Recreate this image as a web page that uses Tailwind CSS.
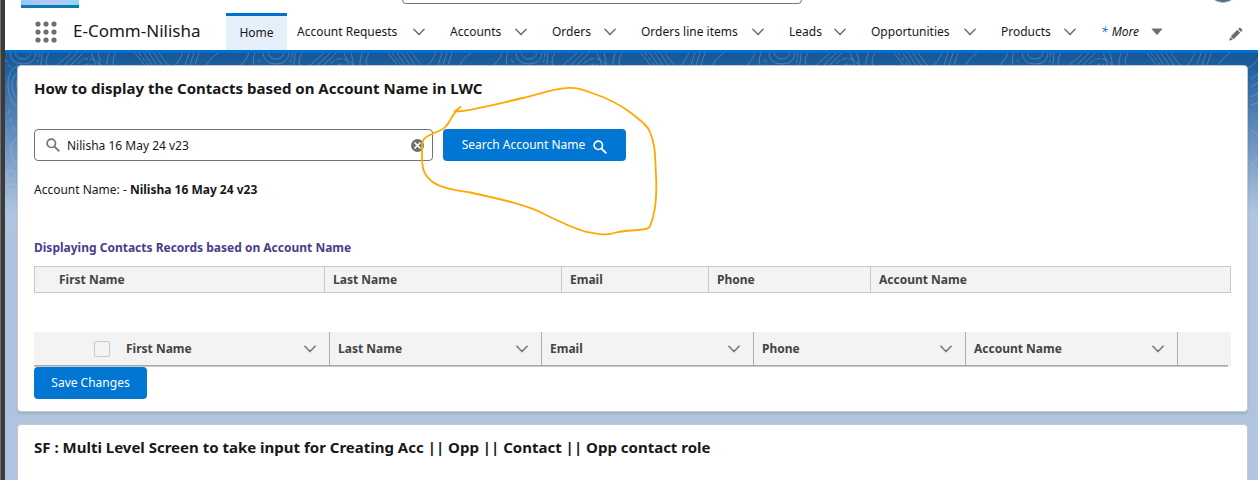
<!DOCTYPE html>
<html lang="en">
<head>
<meta charset="utf-8">
<meta name="viewport" content="width=device-width, initial-scale=1">
<title>E-Comm-Nilisha | Home</title>
<script src="https://cdn.jsdelivr.net/npm/@tailwindcss/browser@4"></script>
</head>
<body class="flex h-screen overflow-hidden bg-[#b0c4df] font-['Noto_Sans','Open_Sans',sans-serif] text-xs text-[#181818]">
<svg class="hidden" aria-hidden="true">
  <symbol id="chevron" viewBox="0 0 12 8"><path d="M.9 1.3 6 6.6 11.100 1.3" fill="none" stroke="currentColor" stroke-width="1.500" stroke-linecap="round" stroke-linejoin="round"/></symbol>
  <symbol id="search" viewBox="0 0 14 14"><circle cx="5.3" cy="5.3" r="4.2" fill="none" stroke="currentColor" stroke-width="1.7"/><path d="m8.600 8.600 4.200 4.200" stroke="currentColor" stroke-width="1.900" stroke-linecap="round"/></symbol>
</svg>
<div class="w-[5px] shrink-0 border-l border-[#707070] bg-[#3b3b3b]"></div>
<div class="flex min-w-0 flex-1 flex-col">
  <header class="shrink-0 border-b-3 border-[#0070d2] bg-white">
    <div class="flex h-[13px] items-end overflow-hidden pl-4 pr-[19px]">
      <div class="mb-[5px] h-5 w-[58px] shrink-0 border-b-3 border-[#0f78b4] bg-linear-to-r from-[#8fc9f5] via-[#b9c7f5] to-[#8fd8f5]"></div>
      <input type="search" aria-label="Search" class="mb-[9px] ml-[323px] h-8 w-[400px] rounded-sm border border-[#747474]">
      <button aria-label="Profile" class="mb-[10px] ml-auto size-8 shrink-0 rounded-full border border-[#a9b4c4] bg-[#50698f]"></button>
    </div>
    <nav class="flex h-[37px] items-center whitespace-nowrap" aria-label="Main">
      <button aria-label="App Launcher" class="ml-[30px] text-[#706e6b]"><svg class="size-[22px]" viewBox="0 0 22 22" fill="currentColor"><circle cx="3" cy="3" r="2.6"/><circle cx="11" cy="3" r="2.6"/><circle cx="19" cy="3" r="2.6"/><circle cx="3" cy="11" r="2.6"/><circle cx="11" cy="11" r="2.6"/><circle cx="19" cy="11" r="2.6"/><circle cx="3" cy="19" r="2.6"/><circle cx="11" cy="19" r="2.6"/><circle cx="19" cy="19" r="2.6"/></svg></button>
      <span class="w-[169px] pl-4 text-[17px]">E-Comm-Nilisha</span>
      <a href="#" class="flex h-full w-[61px] items-center justify-center border-t-3 border-[#0070d2] bg-[#e5effa] pb-px">Home</a>
      <div class="flex w-[151px] items-center justify-between pl-[10px] pr-[13px]"><a href="#">Account Requests</a><button aria-label="Account Requests list" class="text-[#706e6b]"><svg class="h-2 w-3"><use href="#chevron"/></svg></button></div>
      <div class="flex w-[102px] items-center justify-between pl-3 pr-[13px]"><a href="#">Accounts</a><button aria-label="Accounts list" class="text-[#706e6b]"><svg class="h-2 w-3"><use href="#chevron"/></svg></button></div>
      <div class="flex w-[89px] items-center justify-between pl-3 pr-[13px]"><a href="#">Orders</a><button aria-label="Orders list" class="text-[#706e6b]"><svg class="h-2 w-3"><use href="#chevron"/></svg></button></div>
      <div class="flex w-[148px] items-center justify-between pl-3 pr-[13px]"><a href="#">Orders line items</a><button aria-label="Orders line items list" class="text-[#706e6b]"><svg class="h-2 w-3"><use href="#chevron"/></svg></button></div>
      <div class="flex w-[82px] items-center justify-between pl-3 pr-[13px]"><a href="#">Leads</a><button aria-label="Leads list" class="text-[#706e6b]"><svg class="h-2 w-3"><use href="#chevron"/></svg></button></div>
      <div class="flex w-[130px] items-center justify-between pl-3 pr-[13px]"><a href="#">Opportunities</a><button aria-label="Opportunities list" class="text-[#706e6b]"><svg class="h-2 w-3"><use href="#chevron"/></svg></button></div>
      <div class="flex w-[100px] items-center justify-between pl-3 pr-[13px]"><a href="#">Products</a><button aria-label="Products list" class="text-[#706e6b]"><svg class="h-2 w-3"><use href="#chevron"/></svg></button></div>
      <button class="flex items-center pl-3 italic"><span class="mr-1 text-[#0176d3]">*</span>More<svg class="ml-3 h-[7px] w-3 text-[#706e6b]" viewBox="0 0 12 7" fill="currentColor"><path d="M1 .4h10q.7.1.3.7L6.600 6.500q-.6.5-1.200 0L.7 1.100Q.300.500 1 .400z"/></svg></button>
      <button aria-label="Edit navigation" class="ml-auto mr-[15px] mt-1 text-[#706e6b]"><svg class="size-[14px]" viewBox="0 0 14 14" fill="currentColor"><path d="M10.200.9q.7-.7 1.400 0l1.500 1.500q.7.7 0 1.400l-1.100 1.100L9.100 2z"/><path d="m8.300 2.800 2.900 2.900-6.600 6.600-2.900-2.900z"/><path d="m1.200 10.100 2.700 2.700-3 .8q-.600.100-.5-.5z"/></svg></button>
    </nav>
  </header>
  <main class="relative flex-1 overflow-hidden bg-linear-to-b from-[#195594] from-0% via-[#1b5f9e] via-[12px] to-[#b0c4df] to-[160px] pl-3 pr-[10px] pt-3">
    <svg class="absolute inset-0 h-[200px] w-full" aria-hidden="true">
      <defs>
        <pattern id="topo" width="253" height="200" patternUnits="userSpaceOnUse">
          <g fill="none" stroke="#a9cdf0" stroke-opacity=".32" stroke-width="1">
            <path d="M5 0q1 11 13 11T31 0M10 0q2 6 8 6t8-6" />
            <path d="M34 0q0 8-4 14M0 6q4 8 8 10" stroke-dasharray="4 2"/>
            <path d="M44 0q-6 9 0 16M37 0q0 8-2 14M50 14 66 0M56 16 72 0M62 16 78 0"/>
            <path d="M68 16Q84-6 100 18M74 18Q84 4 92 18" stroke-dasharray="5 2"/>
            <path d="M86 0q4 6 5 16M93 0q3 8 2 16M104 0q-3 8-2 16M111 0q-6 9 0 16M130 0l14 18M139 0l12 18M144 0l12 18M149 0l12 18M154 0q8 12 12 14t12-14"/>
            <path d="M134 0l14 18" stroke-dasharray="4 2"/>
            <path d="M184 0l-6 18M189 0l-6 18M194 0l-6 18M213 0q-10 6-14 18M226 18q14-6 18-18"/>
            <path d="M250 0q-4 8 1 18"/>
            <path d="M13 12Q2 18 3 34T14 56M14 18Q6 24 7 34t8 14M14 24q-5 6 0 16M14 82Q6 88 6 98t8 16M0 134q6-6 14 0M0 184q4-18 12-20"/>
            <circle cx="6" cy="122" r="4.500"/>
            <path d="M0 148 12 134M0 154 12 140M0 160 12 146M0 170 12 154"/>
            <path d="M4 56q0 10 6 22" stroke-dasharray="5 4"/>
            <path d="M234 44q12-8 14-2t-14 10M234 26 253 12M234 34 253 22M234 78q8 0 8 14t11 20M234 112q10-14 19-8M234 128h19M234 136h19M234 144h19M234 152h19"/>
          </g>
        </pattern>
      </defs>
      <rect width="100%" height="200" fill="url(#topo)"/>
    </svg>
    <section class="relative rounded-sm border border-[#c9c9c9] bg-white px-4 pb-3 pt-[10px] shadow-[0_2px_2px_rgba(0,0,0,0.1)]">
      <h1 class="text-[15px] leading-6 font-bold">How to display the Contacts based on Account Name in LWC</h1>
      <form class="mt-[29px] flex items-center gap-[10px]">
        <div class="relative w-[399px]">
          <svg class="absolute left-3 top-[9px] size-[14px] text-[#747474]"><use href="#search"/></svg>
          <input type="text" aria-label="Account name" value="Nilisha 16 May 24 v23" class="block h-8 w-full rounded-sm border border-[#747474] bg-white pl-8 pr-8">
          <button type="button" aria-label="Clear" class="absolute right-[9px] top-[10px] size-[13px]"><svg class="size-[13px]" viewBox="0 0 13 13"><circle cx="6.500" cy="6.500" r="6.500" fill="#706e6b"/><path d="m4 4 5 5M9 4l-5 5" stroke="#fff" stroke-width="1.700" stroke-linecap="round"/></svg></button>
        </div>
        <button type="button" class="flex h-8 w-[183px] items-center justify-center gap-2 rounded-sm bg-[#0176d3] text-white">Search Account Name<svg class="mt-[3px] size-[14px]"><use href="#search"/></svg></button>
      </form>
      <p class="mt-[19px] leading-5">Account Name: - <strong>Nilisha 16 May 24 v23</strong></p>
      <h2 class="mt-[38px] leading-5 font-bold text-[#483d8b]">Displaying Contacts Records based on Account Name</h2>
      <table class="mt-2 h-[27px] w-full table-fixed border-collapse bg-[#f3f3f3] text-left text-[#444444]">
        <colgroup><col class="w-[290px]"><col class="w-[237px]"><col class="w-[147px]"><col class="w-[162px]"><col></colgroup>
        <thead><tr>
          <th class="border border-[#c9c9c9] pl-6">First Name</th>
          <th class="border border-[#c9c9c9] pl-2">Last Name</th>
          <th class="border border-[#c9c9c9] pl-2">Email</th>
          <th class="border border-[#c9c9c9] pl-2">Phone</th>
          <th class="border border-[#c9c9c9] pl-2">Account Name</th>
        </tr></thead>
      </table>
      <div class="mt-[39px] bg-[#f3f3f3] pr-[3px]">
        <div class="border-b border-[#c9c9c9]">
        <table class="h-[34px] w-full table-fixed border-separate border-spacing-0 border-b border-[#a8a8a8] text-left text-[#444444]">
          <colgroup><col class="w-[83px]"><col class="w-[213px]"><col class="w-[212px]"><col class="w-[212px]"><col class="w-[212px]"><col class="w-[212px]"><col></colgroup>
          <thead><tr>
            <th class="pl-[60px]"><input type="checkbox" aria-label="Select all rows" class="block size-4 appearance-none rounded-xs border border-[#c9c9c9] bg-[#f3f3f3]"></th>
            <th class="border-r border-[#aeaeae] pl-[9px] pr-[13px]"><div class="flex items-center justify-between">First Name<button aria-label="First Name actions" class="text-[#747474]"><svg class="h-2 w-3"><use href="#chevron"/></svg></button></div></th>
            <th class="border-r border-[#aeaeae] pl-2 pr-[13px]"><div class="flex items-center justify-between">Last Name<button aria-label="Last Name actions" class="text-[#747474]"><svg class="h-2 w-3"><use href="#chevron"/></svg></button></div></th>
            <th class="border-r border-[#aeaeae] pl-2 pr-[13px]"><div class="flex items-center justify-between">Email<button aria-label="Email actions" class="text-[#747474]"><svg class="h-2 w-3"><use href="#chevron"/></svg></button></div></th>
            <th class="border-r border-[#aeaeae] pl-2 pr-[13px]"><div class="flex items-center justify-between">Phone<button aria-label="Phone actions" class="text-[#747474]"><svg class="h-2 w-3"><use href="#chevron"/></svg></button></div></th>
            <th class="border-r border-[#aeaeae] pl-2 pr-[13px]"><div class="flex items-center justify-between">Account Name<button aria-label="Account Name actions" class="text-[#747474]"><svg class="h-2 w-3"><use href="#chevron"/></svg></button></div></th>
            <th></th>
          </tr></thead>
        </table>
        </div>
      </div>
      <button type="button" class="block h-8 w-[113px] rounded-sm bg-[#0176d3] text-white">Save Changes</button>
      <!-- Hand-drawn highlight around the search button -->
      <svg class="pointer-events-none absolute left-[402px] top-[20px] h-[152px] w-[240px]" viewBox="420 86 240 152" fill="none" stroke="#ffa800" stroke-width="1.800" stroke-linecap="round" stroke-linejoin="round" aria-hidden="true"><path d="M460.500 107 454.700 111.500C470 111.500 500 103 525 97.500C543 93 555 88 569 87.800C578 87.500 585 90 592 93C610 99 622 106 631 113C641 121 648 126 650 132C656 146 655 160 656 175C657 195 656 213 650 226C648 230 644 229 638 230C628 230.500 622 231 616 232.500C607 236 598 234 585 231.500C570 227 560 222 545 214.500C530 206 505 200 470 192.500C455 190 440 188 432 181.500C421 173 422 164 422 148C422 136 427 137 434 133C442 130 446 128 449 122C452 117 454 113 457 110.500"/></svg>
    </section>
    <section class="relative mt-3 h-40 rounded-sm border border-[#c9c9c9] bg-white px-4 pt-[10px]">
      <h1 class="text-[15px] leading-6 font-bold">SF : Multi Level Screen to take input for Creating Acc || Opp || Contact || Opp contact role</h1>
    </section>
  </main>
</div>
</body>
</html>
